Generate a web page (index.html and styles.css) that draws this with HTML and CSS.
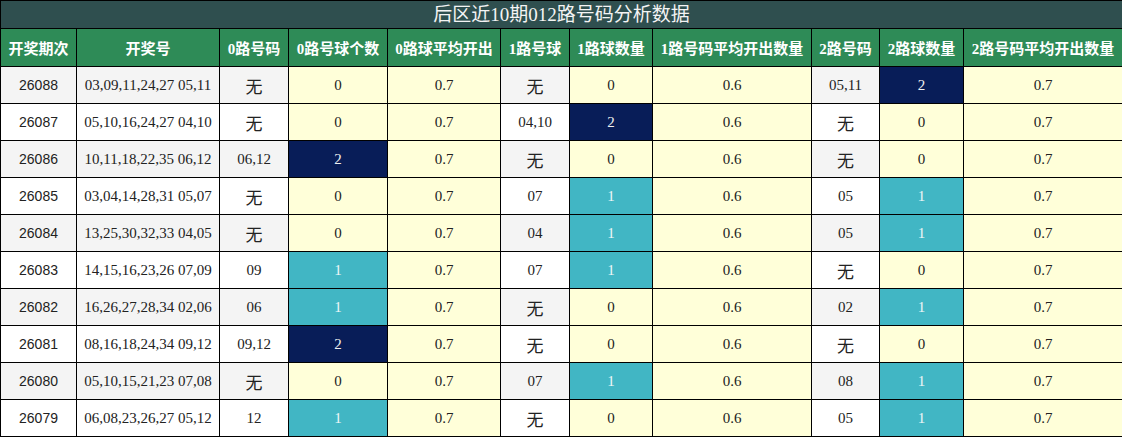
FILE: index.html
```html
<!DOCTYPE html>
<html lang="zh">
<head>
<meta charset="utf-8">
<title>后区近10期012路号码分析数据</title>
<link rel="stylesheet" href="styles.css">
</head>
<body>
<table class="tbl">
  <colgroup>
    <col class="c1"><col class="c2"><col class="c3"><col class="c4"><col class="c5"><col class="c6"><col class="c7"><col class="c8"><col class="c9"><col class="c10"><col class="c11">
  </colgroup>
  <thead>
    <tr class="title-row"><th colspan="11">后区近10期012路号码分析数据</th></tr>
    <tr class="head-row">
      <th>开奖期次</th><th>开奖号</th><th>0路号码</th><th>0路号球个数</th><th>0路球平均开出</th><th>1路号球</th><th>1路球数量</th><th>1路号码平均开出数量</th><th>2路号码</th><th>2路球数量</th><th>2路号码平均开出数量</th>
    </tr>
  </thead>
  <tbody>
    <tr class="odd"><td class="issue">26088</td><td>03,09,11,24,27 05,11</td><td class="none">无</td><td class="y">0</td><td class="y">0.7</td><td class="none">无</td><td class="y">0</td><td class="y">0.6</td><td>05,11</td><td class="n">2</td><td class="y">0.7</td></tr>
    <tr><td class="issue">26087</td><td>05,10,16,24,27 04,10</td><td class="none">无</td><td class="y">0</td><td class="y">0.7</td><td>04,10</td><td class="n">2</td><td class="y">0.6</td><td class="none">无</td><td class="y">0</td><td class="y">0.7</td></tr>
    <tr class="odd"><td class="issue">26086</td><td>10,11,18,22,35 06,12</td><td>06,12</td><td class="n">2</td><td class="y">0.7</td><td class="none">无</td><td class="y">0</td><td class="y">0.6</td><td class="none">无</td><td class="y">0</td><td class="y">0.7</td></tr>
    <tr><td class="issue">26085</td><td>03,04,14,28,31 05,07</td><td class="none">无</td><td class="y">0</td><td class="y">0.7</td><td>07</td><td class="t">1</td><td class="y">0.6</td><td>05</td><td class="t">1</td><td class="y">0.7</td></tr>
    <tr class="odd"><td class="issue">26084</td><td>13,25,30,32,33 04,05</td><td class="none">无</td><td class="y">0</td><td class="y">0.7</td><td>04</td><td class="t">1</td><td class="y">0.6</td><td>05</td><td class="t">1</td><td class="y">0.7</td></tr>
    <tr><td class="issue">26083</td><td>14,15,16,23,26 07,09</td><td>09</td><td class="t">1</td><td class="y">0.7</td><td>07</td><td class="t">1</td><td class="y">0.6</td><td class="none">无</td><td class="y">0</td><td class="y">0.7</td></tr>
    <tr class="odd"><td class="issue">26082</td><td>16,26,27,28,34 02,06</td><td>06</td><td class="t">1</td><td class="y">0.7</td><td class="none">无</td><td class="y">0</td><td class="y">0.6</td><td>02</td><td class="t">1</td><td class="y">0.7</td></tr>
    <tr><td class="issue">26081</td><td>08,16,18,24,34 09,12</td><td>09,12</td><td class="n">2</td><td class="y">0.7</td><td class="none">无</td><td class="y">0</td><td class="y">0.6</td><td class="none">无</td><td class="y">0</td><td class="y">0.7</td></tr>
    <tr class="odd"><td class="issue">26080</td><td>05,10,15,21,23 07,08</td><td class="none">无</td><td class="y">0</td><td class="y">0.7</td><td>07</td><td class="t">1</td><td class="y">0.6</td><td>08</td><td class="t">1</td><td class="y">0.7</td></tr>
    <tr><td class="issue">26079</td><td>06,08,23,26,27 05,12</td><td>12</td><td class="t">1</td><td class="y">0.7</td><td class="none">无</td><td class="y">0</td><td class="y">0.6</td><td>05</td><td class="t">1</td><td class="y">0.7</td></tr>
  </tbody>
</table>
</body>
</html>
```

FILE: styles.css
```css
html, body {
  margin: 0;
  padding: 0;
  background: #ffffff;
}

.tbl {
  width: 1122px;
  border-collapse: collapse;
  table-layout: fixed;
  font-family: "Liberation Serif", "Noto Sans CJK SC", serif;
  font-size: 15px;
  color: #222222;
}

.c1 { width: 76px; }
.c2 { width: 143px; }
.c3 { width: 69px; }
.c4 { width: 99px; }
.c5 { width: 113px; }
.c6 { width: 69px; }
.c7 { width: 83px; }
.c8 { width: 159px; }
.c9 { width: 68px; }
.c10 { width: 84px; }
.c11 { width: 159px; }

.tbl th,
.tbl td {
  border: 1px solid #000000;
  padding: 0;
  text-align: center;
  white-space: nowrap;
  overflow: hidden;
}

.title-row th {
  height: 27px;
  background: #2f4f4f;
  color: #f4f4f4;
  font-weight: normal;
  font-size: 19px;
  line-height: 27px;
}

.head-row th {
  height: 37px;
  background: #2e8b57;
  color: #ffffff;
  font-weight: bold;
  font-size: 15px;
}

.tbl td {
  height: 36px;
  background: #ffffff;
}

.tbl tr.odd td {
  background: #f4f4f4;
}

.tbl td.issue {
  font-family: "Liberation Sans", "Noto Sans CJK SC", sans-serif;
  font-size: 14px;
}

.tbl td.none {
  font-family: "Noto Sans CJK SC", sans-serif;
  font-size: 17px;
}

.tbl tr td.y {
  background: #ffffd9;
}

.tbl tr td.t {
  background: #41b6c4;
  color: #eef6f7;
}

.tbl tr td.n {
  background: #081d58;
  color: #f0f0f0;
}
```
